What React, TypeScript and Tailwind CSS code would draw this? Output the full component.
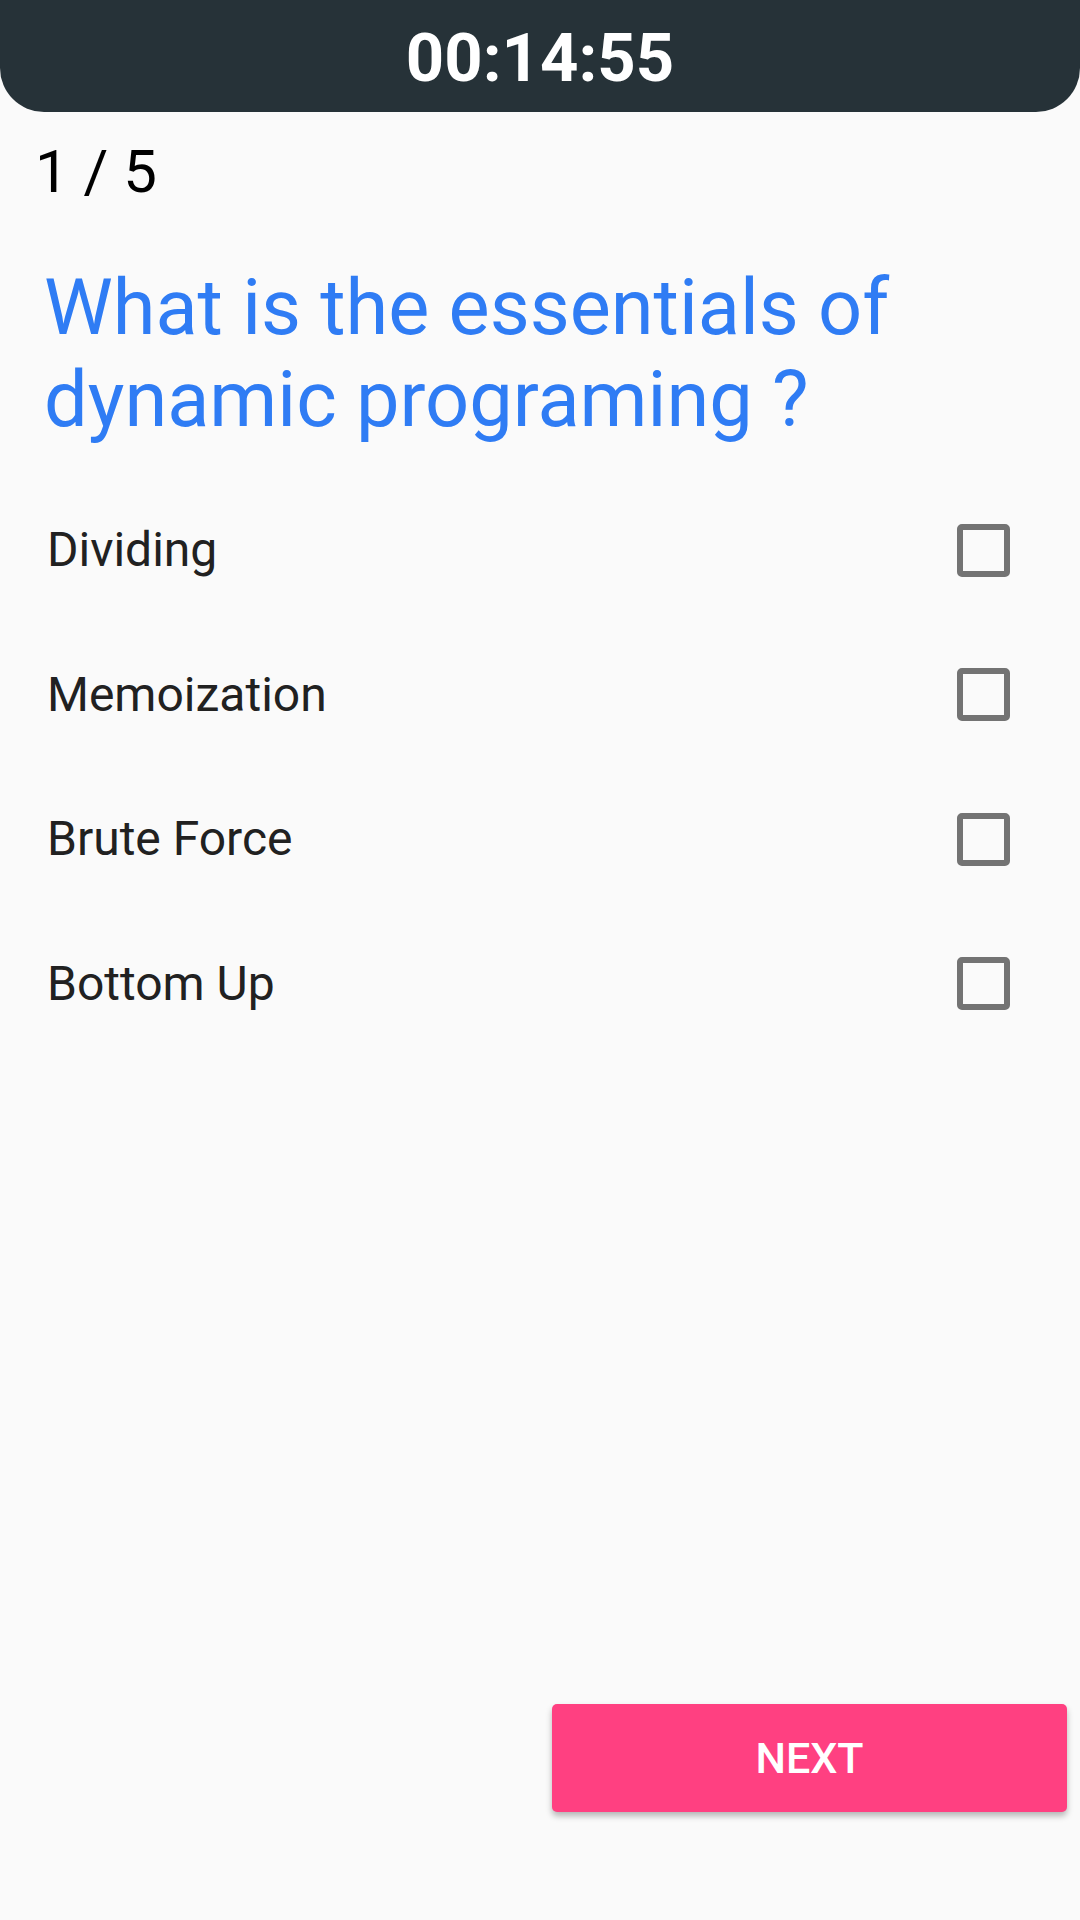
const options = ["Dividing", "Memoization", "Brute Force", "Bottom Up"];

function Checkbox() {
  return <div className="h-[53px] w-[53px] rounded-[5px] border-[6px] border-[#737373]" />;
}

export default function App() {
  return (
    <div
      className="flex h-[1920px] w-[1080px] flex-col bg-[#fafafa]"
      style={{ fontFamily: "Roboto, 'Liberation Sans', sans-serif" }}
    >
      <header className="flex h-[112px] items-center justify-center rounded-b-[44px] bg-[#263238]">
        <span className="pt-[4px] text-[67px] font-bold leading-none text-white">00:14:55</span>
      </header>

      <div className="mt-[30px] pl-[35px] text-[60px] leading-none text-black">1 / 5</div>

      <h1 className="mt-[60px] pl-[44px] pr-[40px] text-[77.5px] font-normal leading-[92px] text-[#2f7cf4]">
        What is the essentials of dynamic programing ?
      </h1>

      <div className="mt-[32px] flex flex-col">
        {options.map((o) => (
          <label key={o} className="flex h-[144.5px] items-center justify-between pl-[47px] pr-[70px]">
            <span className="text-[48px] leading-[56px] text-[#212121]">{o}</span>
            <Checkbox />
          </label>
        ))}
      </div>

      <button className="mt-auto mr-[13px] mb-[108px] flex h-[108px] w-[515px] items-center justify-center self-end rounded-[5px] bg-[#ff4081] text-[43px] font-medium leading-none text-white shadow-[0_4px_6px_rgba(0,0,0,0.28)]">
        NEXT
      </button>
    </div>
  );
}
